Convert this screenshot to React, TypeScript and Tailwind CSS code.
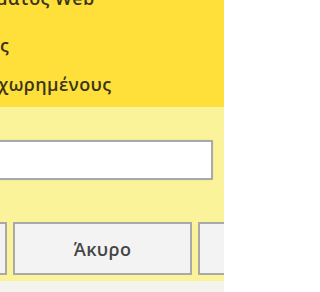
import React from "react";

export default function App() {
  return (
    <div
      className="w-[224px] h-[292px] overflow-hidden bg-[#f4f4ee] flex flex-col"
      style={{ fontFamily: '"Open Sans", "Noto Sans", sans-serif' }}
    >
      <div className="h-[107px] shrink-0 bg-[#ffe03b] overflow-hidden text-[#3a3418] text-[18px] leading-[18px] font-semibold tracking-[0.4px]">
        <div className="mt-[-11px] h-[18px] ml-[-4px] whitespace-nowrap">ματος Web</div>
        <div className="mt-[29px] h-[18px] whitespace-nowrap">ς</div>
        <div className="mt-[21px] h-[18px] ml-[-2px] whitespace-nowrap">χωρημένους</div>
      </div>
      <div className="h-[174px] shrink-0 bg-[#faf39a] flex flex-col">
        <div className="mt-[33px] h-[40px] ml-[-10px] w-[223px] bg-white border-2 border-[#a9a9a9] rounded-[1px] shadow-[0_0_1px_#bbb]" />
        <div className="mt-[42px] flex gap-[6px] ml-[-40px]">
          <div className="w-[47px] h-[53px] shrink-0 bg-[#f3f3f3] border-2 border-[#a9a9a9]" />
          <div className="w-[179px] h-[53px] shrink-0 bg-[#f3f3f3] border-2 border-[#a9a9a9] flex items-center justify-center text-[18px] font-semibold tracking-[0.4px] text-[#454545] pt-[1px]">
            Άκυρο
          </div>
          <div className="w-[60px] h-[53px] shrink-0 bg-[#f3f3f3] border-2 border-[#a9a9a9]" />
        </div>
      </div>
    </div>
  );
}
